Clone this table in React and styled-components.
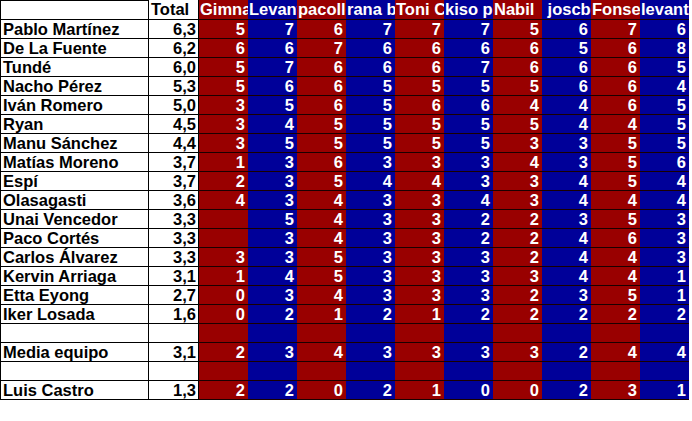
import styled, { createGlobalStyle } from 'styled-components'

const GlobalStyle = createGlobalStyle`
  html, body {
    margin: 0;
    padding: 0;
    background: #fff;
  }
  body {
    font-family: "Liberation Sans", Arial, sans-serif;
  }
`

const teams = ['Gimnasio', 'Levante', 'pacollo', 'rana blanca', 'Toni Castro', 'kiso puro', 'Nabil', '\u00a0joscbl', 'Fonseca', 'levante']

const rows = [
  ['Pablo Martínez', '6,3', [5, 7, 6, 7, 7, 7, 5, 6, 7, 6]],
  ['De La Fuente', '6,2', [6, 6, 7, 6, 6, 6, 6, 5, 6, 8]],
  ['Tundé', '6,0', [5, 7, 6, 6, 6, 7, 6, 6, 6, 5]],
  ['Nacho Pérez', '5,3', [5, 6, 6, 5, 5, 5, 5, 6, 6, 4]],
  ['Iván Romero', '5,0', [3, 5, 6, 5, 6, 6, 4, 4, 6, 5]],
  ['Ryan', '4,5', [3, 4, 5, 5, 5, 5, 5, 4, 4, 5]],
  ['Manu Sánchez', '4,4', [3, 5, 5, 5, 5, 5, 3, 3, 5, 5]],
  ['Matías Moreno', '3,7', [1, 3, 6, 3, 3, 3, 4, 3, 5, 6]],
  ['Espí', '3,7', [2, 3, 5, 4, 4, 3, 3, 4, 5, 4]],
  ['Olasagasti', '3,6', [4, 3, 4, 3, 3, 4, 3, 4, 4, 4]],
  ['Unai Vencedor', '3,3', ['', 5, 4, 3, 3, 2, 2, 3, 5, 3]],
  ['Paco Cortés', '3,3', ['', 3, 4, 3, 3, 2, 2, 4, 6, 3]],
  ['Carlos Álvarez', '3,3', [3, 3, 5, 3, 3, 3, 2, 4, 4, 3]],
  ['Kervin Arriaga', '3,1', [1, 4, 5, 3, 3, 3, 3, 4, 4, 1]],
  ['Etta Eyong', '2,7', [0, 3, 4, 3, 3, 3, 2, 3, 5, 1]],
  ['Iker Losada', '1,6', [0, 2, 1, 2, 1, 2, 2, 2, 2, 2]],
  ['', '', Array(10).fill('')],
  ['Media equipo', '3,1', [2, 3, 4, 3, 3, 3, 3, 2, 4, 4]],
  ['', '', Array(10).fill('')],
  ['Luis Castro', '1,3', [2, 2, 0, 2, 1, 0, 0, 2, 3, 1]],
]

export default function App() {
  return (
    <>
      <GlobalStyle />
      <Sheet>
        <NameCell $head />
        <TotalCell $head>Total</TotalCell>
        {teams.map((t, i) => (
          <TeamHead key={t} $blue={i % 2 === 1}>{t}</TeamHead>
        ))}
        {rows.map(([name, total, scores], r) => (
          <Row key={r}>
            <NameCell>{name}</NameCell>
            <TotalCell>{total}</TotalCell>
            {scores.map((s, i) => (
              <ScoreCell key={i} $blue={i % 2 === 1}>{s}</ScoreCell>
            ))}
          </Row>
        ))}
      </Sheet>
    </>
  )
}

const Sheet = styled.div`
  display: grid;
  grid-template-columns: 149px 50px repeat(10, 49px);
  grid-template-rows: 20px;
  grid-auto-rows: 19px;
  width: 689px;
  font-size: 16.5px;
  font-weight: bold;
  line-height: 18px;
`

const Row = styled.div`
  display: contents;
`

const Cell = styled.div`
  box-sizing: border-box;
  border-bottom: 1px solid #000;
  white-space: nowrap;
  overflow: hidden;
`

const NameCell = styled(Cell)`
  border-left: 1px solid #000;
  border-right: 1px solid #000;
  border-top: ${p => (p.$head ? '1px solid #000' : 'none')};
  padding-left: 2px;
  color: #000;
`

const TotalCell = styled(Cell)`
  border-right: 1px solid #000;
  text-align: ${p => (p.$head ? 'left' : 'right')};
  padding: ${p => (p.$head ? '0 0 0 2px' : '0 2px 0 0')};
  color: #000;
`

const TeamHead = styled(Cell)`
  background: ${p => (p.$blue ? '#000099' : '#990000')};
  color: #fff;
  padding-left: 1px;
  border-bottom-color: #1a0000;
`

const ScoreCell = styled(Cell)`
  background: ${p => (p.$blue ? '#000099' : '#990000')};
  color: #fff;
  text-align: right;
  padding-right: 3px;
  border-bottom-color: #1a0000;
`
